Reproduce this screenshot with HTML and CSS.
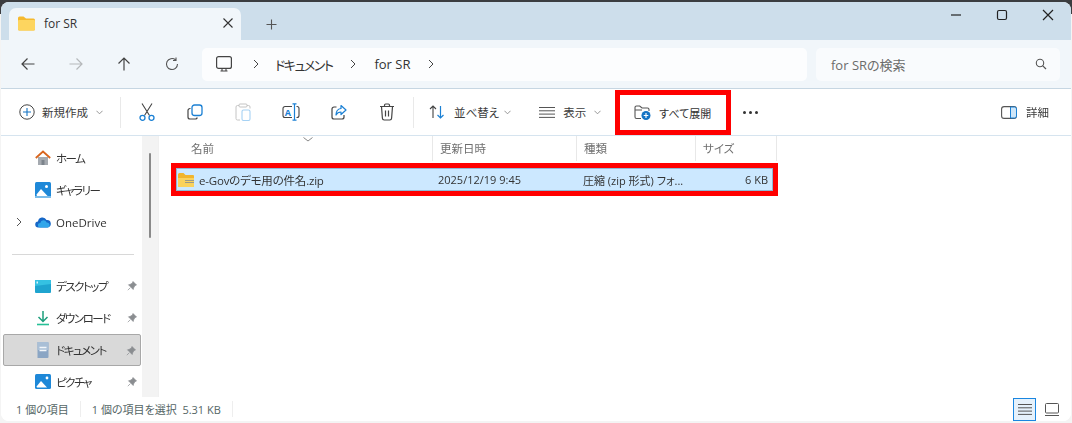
FILE: index.html
```html
<!DOCTYPE html>
<html lang="ja">
<head>
<meta charset="utf-8">
<title>for SR</title>
<link rel="stylesheet" href="styles.css">
</head>
<body>
<div class="window">
  <header class="titlebar">
    <div class="tab">
      <svg class="tab-folder" viewBox="0 0 17 15" width="17" height="15"><path d="M0 2a1.5 1.5 0 0 1 1.5-1.5h4L8 2.500h7.500A1.500 1.500 0 0 1 17 4v9a1.500 1.500 0 0 1-1.500 1.500h-14A1.500 1.500 0 0 1 0 13z" fill="#f5b92e"/><path d="M0 5a1 1 0 0 1 1-1h15a1 1 0 0 1 1 1v8a1.500 1.500 0 0 1-1.500 1.500h-14A1.500 1.500 0 0 1 0 13z" fill="#fdd55f"/></svg>
      <span class="tab-title">for SR</span>
      <svg class="tab-close" viewBox="0 0 10 10" width="10" height="10"><path d="M.5.5l9 9M9.500.5l-9 9" stroke="#333" stroke-width="1.100" fill="none"/></svg>
    </div>
    <svg class="tab-add" viewBox="0 0 11 11" width="11" height="11"><path d="M5.500.5v10M.5 5.500h10" stroke="#555" stroke-width="1.100" fill="none"/></svg>
    <div class="win-controls">
      <svg viewBox="0 0 12 12" width="12" height="12"><path d="M1 6h10" stroke="#222" stroke-width="1.200"/></svg>
      <svg viewBox="0 0 12 12" width="12" height="12"><rect x="1.500" y="1.500" width="9" height="9" rx="1.500" stroke="#222" stroke-width="1.200" fill="none"/></svg>
      <svg viewBox="0 0 12 12" width="12" height="12"><path d="M1 1l10 10M11 1L1 11" stroke="#222" stroke-width="1.200" fill="none"/></svg>
    </div>
  </header>

  <nav class="navbar">
    <div class="nav-buttons">
      <svg viewBox="0 0 14 14" width="14" height="14"><path d="M13.500 7H1M6.500 1.500L1 7l5.500 5.500" stroke="#444" stroke-width="1.200" fill="none"/></svg>
      <svg viewBox="0 0 14 14" width="14" height="14"><path d="M.5 7H13M7.500 1.500L13 7l-5.500 5.500" stroke="#b5b8ba" stroke-width="1.200" fill="none"/></svg>
      <svg viewBox="0 0 14 14" width="14" height="14"><path d="M7 13.500V1M1.500 6.500L7 1l5.500 5.500" stroke="#444" stroke-width="1.200" fill="none"/></svg>
      <svg viewBox="0 0 14 14" width="14" height="14"><path d="M12.500 7A5.500 5.500 0 1 1 10.500 2.800M11 .5v3H8" stroke="#555" stroke-width="1.100" fill="none"/></svg>
    </div>
    <div class="address">
      <svg class="pc" viewBox="0 0 16 16" width="16" height="16"><rect x=".6" y=".6" width="14.800" height="11.800" rx="2" stroke="#444" stroke-width="1.200" fill="none"/><path d="M4.500 15h7M6 12.500v2.500M10 12.500v2.500" stroke="#444" stroke-width="1.100"/></svg>
      <svg class="crumb-sep" viewBox="0 0 6 10" width="6" height="10"><path d="M1 1l4 4-4 4" stroke="#444" stroke-width="1" fill="none"/></svg>
      <span class="crumb crumb-kana">ドキュメント</span>
      <svg class="crumb-sep" viewBox="0 0 6 10" width="6" height="10"><path d="M1 1l4 4-4 4" stroke="#444" stroke-width="1" fill="none"/></svg>
      <span class="crumb">for SR</span>
      <svg class="crumb-sep" viewBox="0 0 6 10" width="6" height="10"><path d="M1 1l4 4-4 4" stroke="#444" stroke-width="1" fill="none"/></svg>
    </div>
    <div class="search">
      <span>for SRの検索</span>
      <svg viewBox="0 0 12 12" width="12" height="12"><circle cx="5" cy="5" r="3.700" stroke="#555" stroke-width="1.100" fill="none"/><path d="M7.800 7.800L11 11" stroke="#555" stroke-width="1.200"/></svg>
    </div>
  </nav>

  <div class="toolbar">
    <button class="tool tool-new">
      <svg viewBox="0 0 16 16" width="16" height="16"><circle cx="8" cy="8" r="7.200" stroke="#444" stroke-width="1" fill="none"/><path d="M8 4v8M4 8h8" stroke="#1574c4" stroke-width="1.100"/></svg>
      <span>新規作成</span>
      <svg class="chev" viewBox="0 0 8 5" width="7" height="5"><path d="M.5.5L4 4 7.500.5" stroke="#888" fill="none"/></svg>
    </button>
    <i class="tool-sep"></i>
    <div class="icon-tools">
      <svg viewBox="0 0 16 18" width="16" height="18"><path d="M3 .5l7.500 12M13 .5L5.500 12.500" stroke="#444" stroke-width="1.100" fill="none"/><circle cx="3.500" cy="14.800" r="2.500" stroke="#1b80d4" stroke-width="1.300" fill="none"/><circle cx="12.500" cy="14.800" r="2.500" stroke="#1b80d4" stroke-width="1.300" fill="none"/></svg>
      <svg viewBox="0 0 16 16" width="16" height="16"><path d="M3.500 4.500H3A2 2 0 0 0 1 6.500V13a2 2 0 0 0 2 2h5.500a2 2 0 0 0 1.800-1.500" stroke="#444" stroke-width="1.200" fill="none"/><rect x="5" y="1" width="10" height="10.500" rx="2.500" stroke="#1b80d4" stroke-width="1.300" fill="none"/></svg>
      <svg viewBox="0 0 16 18" width="16" height="18"><path d="M4 2.500H2.500a1.500 1.500 0 0 0-1.500 1.500v11.500A1.500 1.500 0 0 0 2.500 17H5M12 2.500h1.500A1.500 1.500 0 0 1 15 4v1.500" stroke="#c4c4c4" fill="none"/><rect x="4" y="1" width="8" height="3" rx="1" stroke="#c4c4c4" fill="none"/><rect x="7" y="7" width="8" height="10.500" rx="1.500" stroke="#a6d2f4" stroke-width="1.100" fill="none"/></svg>
      <svg viewBox="0 0 18 18" width="18" height="18"><path d="M10 3.500H3a2 2 0 0 0-2 2v7a2 2 0 0 0 2 2h7M14.500 3.500h.5a2 2 0 0 1 2 2v7a2 2 0 0 1-2 2h-.5" stroke="#444" stroke-width="1.100" fill="none"/><path d="M10.500.8h4M10.500 17.200h4M12.500 .8v16.400" stroke="#1b80d4" stroke-width="1.200" fill="none"/><text x="2.800" y="12.500" class="rename-a">A</text></svg>
      <svg viewBox="0 0 16 16" width="16" height="16"><path d="M5.500 3H3a2 2 0 0 0-2 2v8a2 2 0 0 0 2 2h8a2 2 0 0 0 2-2v-2" stroke="#444" stroke-width="1.200" fill="none"/><path d="M10 1.500L15 6l-5 4.500V8C7.500 8 6 9 5 11c0-3.500 1.500-6 5-6.500z" stroke="#1b80d4" stroke-width="1.200" fill="none" stroke-linejoin="round"/></svg>
      <svg viewBox="0 0 16 18" width="16" height="18"><path d="M1 3.500h14M5.500 3.500V2.200A1.200 1.200 0 0 1 6.700 1h2.600a1.200 1.200 0 0 1 1.200 1.200v1.300M2.500 3.500l.9 11.800A1.800 1.800 0 0 0 5.200 17h5.600a1.800 1.800 0 0 0 1.800-1.700l.9-11.800M6.500 7.500v6M9.500 7.500v6" stroke="#444" stroke-width="1.200" fill="none"/></svg>
    </div>
    <i class="tool-sep tool-sep-tight"></i>
    <button class="tool tool-sort">
      <svg viewBox="0 0 16 14" width="16" height="14"><path d="M4 13V1M1 4l3-3 3 3" stroke="#444" stroke-width="1.100" fill="none"/><path d="M11.500 1v12M8.500 10l3 3 3-3" stroke="#1b80d4" stroke-width="1.200" fill="none"/></svg>
      <span>並べ替え</span>
      <svg class="chev" viewBox="0 0 8 5" width="7" height="5"><path d="M.5.5L4 4 7.500.5" stroke="#888" fill="none"/></svg>
    </button>
    <button class="tool tool-view">
      <svg viewBox="0 0 16 11" width="16" height="11"><path d="M0 .5h16M0 3.800h16M0 7.100h16M0 10.400h16" stroke="#555" stroke-width="1"/></svg>
      <span>表示</span>
      <svg class="chev" viewBox="0 0 8 5" width="7" height="5"><path d="M.5.5L4 4 7.500.5" stroke="#888" fill="none"/></svg>
    </button>
    <button class="tool tool-extract">
      <svg viewBox="0 0 17 15" width="17" height="15"><path d="M7 13.500H2.500A1.500 1.500 0 0 1 1 12V2.500A1.500 1.500 0 0 1 2.500 1h3.200L8 3h5.500A1.500 1.500 0 0 1 15 4.500V6M1 5h7" stroke="#555" stroke-width="1.100" fill="none"/><circle cx="12" cy="10.500" r="4.500" fill="#1574c4"/><path d="M12 8v5M9.700 10.500h4.600" stroke="#fff" stroke-width="1.100"/></svg>
      <span>すべて展開</span>
    </button>
    <div class="more"><i></i><i></i><i></i></div>
    <button class="tool tool-details">
      <svg viewBox="0 0 16 13" width="16" height="13"><rect x=".6" y=".6" width="14.800" height="11.800" rx="2.500" stroke="#555" stroke-width="1.100" fill="none"/><path d="M9.500 1h4a2 2 0 0 1 2 2v7a2 2 0 0 1-2 2h-4z" fill="#cfe6f8" stroke="#1b80d4"/></svg>
      <span>詳細</span>
    </button>
  </div>

  <div class="main">
    <aside class="sidebar">
      <ul class="tree">
        <li class="item">
          <svg viewBox="0 0 16 16" width="16" height="16"><path d="M3 7h10v8H3z" fill="#a5aab0"/><path d="M6.500 10h3v5h-3z" fill="#7c848c"/><path d="M.8 8L8 1.500 15.200 8" stroke="#d9651d" stroke-width="1.800" fill="none"/></svg>
          <span class="kana">ホーム</span>
        </li>
        <li class="item">
          <svg viewBox="0 0 16 16" width="16" height="16"><rect width="16" height="16" rx="1.500" fill="#1e88d8"/><circle cx="11.500" cy="4.500" r="1.500" fill="#fff"/><path d="M1.500 12.500L6 7l7 7.500H2z" fill="#fff"/><path d="M0 14h16v2H0z" fill="#7bbce9"/></svg>
          <span class="kana">ギャラリー</span>
        </li>
        <li class="item">
          <svg class="expander" viewBox="0 0 6 10" width="6" height="10"><path d="M1 1l4 4-4 4" stroke="#555" fill="none"/></svg>
          <svg viewBox="0 0 16 12" width="16" height="12"><path d="M3.500 11.500a3 3 0 0 1-.5-6 4.500 4.500 0 0 1 8.500-1.500 3.500 3.500 0 0 1 1 7.500z" fill="#1667c7"/><path d="M5 11.500a2.300 2.300 0 0 1 .3-4.600 3.300 3.300 0 0 1 6.300-.4 2.700 2.700 0 0 1 1.700 5z" fill="#31a6ea"/></svg>
          <span>OneDrive</span>
        </li>
        <li class="tree-rule"></li>
        <li class="item pinned">
          <svg viewBox="0 0 16 13" width="16" height="13"><rect width="16" height="13" rx="1" fill="#1fa4cf"/><path d="M0 0h16v4L0 6z" fill="#35c1e2"/><rect x="1.500" y="1.500" width="1.500" height="2" fill="#d9f4fb"/></svg>
          <span class="kana">デスクトップ</span>
          <svg class="pin" viewBox="0 0 10 10" width="10" height="10"><path d="M6 .5L9.500 4 8 4.500 6.500 7l-.3 1.500L1.500 3.800 3 3.500 5.500 2z M3.300 6.700L.8 9.200" fill="#8a8d90" stroke="#8a8d90" stroke-width=".7"/></svg>
        </li>
        <li class="item pinned">
          <svg viewBox="0 0 16 16" width="16" height="16"><path d="M8 1v10M3.500 7L8 11.500 12.500 7" stroke="#1d9e7c" stroke-width="1.500" fill="none"/><path d="M2 14.500h12" stroke="#27c096" stroke-width="1.600"/></svg>
          <span class="kana">ダウンロード</span>
          <svg class="pin" viewBox="0 0 10 10" width="10" height="10"><path d="M6 .5L9.500 4 8 4.500 6.500 7l-.3 1.500L1.500 3.800 3 3.500 5.500 2z M3.300 6.700L.8 9.200" fill="#8a8d90" stroke="#8a8d90" stroke-width=".7"/></svg>
        </li>
        <li class="item pinned selected">
          <svg viewBox="0 0 16 16" width="16" height="16"><path d="M2.500 0h10a1 1 0 0 1 1 1v14a1 1 0 0 1-1 1h-10z" fill="#8aa5c4"/><path d="M2.500 0h10a1 1 0 0 1 1 1v7H2.500z" fill="#a9bfd6"/><path d="M4.500 5.500h7M4.500 8.500h7" stroke="#f2f6fa" stroke-width="1.300"/></svg>
          <span class="kana">ドキュメント</span>
          <svg class="pin" viewBox="0 0 10 10" width="10" height="10"><path d="M6 .5L9.500 4 8 4.500 6.500 7l-.3 1.500L1.500 3.800 3 3.500 5.500 2z M3.300 6.700L.8 9.200" fill="#8a8d90" stroke="#8a8d90" stroke-width=".7"/></svg>
        </li>
        <li class="item pinned">
          <svg viewBox="0 0 16 16" width="16" height="16"><rect width="16" height="15" rx="1.500" fill="#1e88d8"/><circle cx="12" cy="4" r="1.400" fill="#fff"/><path d="M1.500 12.500L6 7l6 6.500H2z" fill="#fff"/></svg>
          <span class="kana">ピクチャ</span>
          <svg class="pin" viewBox="0 0 10 10" width="10" height="10"><path d="M6 .5L9.500 4 8 4.500 6.500 7l-.3 1.500L1.500 3.800 3 3.500 5.500 2z M3.300 6.700L.8 9.200" fill="#8a8d90" stroke="#8a8d90" stroke-width=".7"/></svg>
        </li>
      </ul>
      <div class="scrolltrack"><i class="thumb"></i></div>
    </aside>
    <section class="files">
      <div class="sort-mark"><svg viewBox="0 0 10 5" width="10" height="5"><path d="M.5.500L5 4 9.500.5" stroke="#888" fill="none"/></svg></div>
      <div class="columns">
        <div class="col col-name">名前</div>
        <div class="col col-date">更新日時</div>
        <div class="col col-type">種類</div>
        <div class="col col-size">サイズ</div>
      </div>
      <div class="row-frame">
        <div class="file-row">
          <div class="cell-name">
            <svg viewBox="0 0 16 14" width="16" height="14"><path d="M0 1.500A1.500 1.500 0 0 1 1.500 0h4L7.500 2H15a1 1 0 0 1 1 1v9.500a1.500 1.500 0 0 1-1.500 1.500h-13A1.500 1.500 0 0 1 0 12.500z" fill="#f1b52c"/><path d="M0 5h16v7.500a1.500 1.500 0 0 1-1.500 1.500h-13A1.500 1.500 0 0 1 0 12.500z" fill="#fad25c"/><path d="M7 7.500h9M7 9.500h9" stroke="#9a9a8a" stroke-width="1"/></svg>
            <span class="file-name">e-Govのデモ用の件名.zip</span>
          </div>
          <div class="cell-date">2025/12/19 9:45</div>
          <div class="cell-type">圧縮 (zip 形式) フォ...</div>
          <div class="cell-size">6 KB</div>
        </div>
      </div>
    </section>
  </div>

  <footer class="statusbar">
    <span class="count">1 個の項目</span>
    <i class="status-sep"></i>
    <span class="selection">1 個の項目を選択&nbsp;&nbsp;5.31 KB</span>
    <i class="status-sep"></i>
    <div class="view-toggle">
      <div class="view-btn active"><svg viewBox="0 0 14 11" width="14" height="11"><path d="M0 .5h14M0 3.800h14M0 7.100h14M0 10.400h14" stroke="#555"/></svg></div>
      <div class="view-btn"><svg viewBox="0 0 14 13" width="14" height="13"><rect x=".5" y=".5" width="13" height="9.500" rx="1" stroke="#555" fill="none"/><path d="M0 12.500h14" stroke="#555"/></svg></div>
    </div>
  </footer>
</div>
</body>
</html>
```

FILE: styles.css
```css
* { box-sizing: border-box; }
html, body { height: 100%; }
body {
  margin: 0;
  overflow: hidden;
  background: linear-gradient(#3b3d40 0 14px, #f4f4f4 14px);
  font-family: "Open Sans", "Noto Sans CJK JP", sans-serif;
  font-size: 11.500px;
  color: #3c3c3c;
  font-feature-settings: "palt";
}
ul { list-style: none; margin: 0; padding: 0; }
button { all: unset; box-sizing: border-box; display: flex; align-items: center; }
svg { display: block; flex: none; }
i { display: block; }

.window {
  height: 419px;
  margin: 2px 1px 0;
  border-radius: 8px;
  overflow: hidden;
  background: #fff;
  display: flex;
  flex-direction: column;
  filter: blur(.45px);
}

.titlebar {
  height: 38px;
  flex: none;
  background: #cddeeb;
  display: flex;
  align-items: flex-end;
  padding-left: 8px;
}
.tab {
  width: 232px;
  height: 32px;
  background: #f1f6fa;
  border-radius: 7px 7px 0 0;
  display: flex;
  align-items: center;
  padding: 0 0 2px 9px;
}
.tab-title { margin-left: 9px; font-size: 12px; color: #333; flex: 1; }
.tab-close { margin-right: 8px; }
.tab-add { margin: 0 0 10px 25px; }
.win-controls {
  margin-left: auto;
  align-self: flex-start;
  display: flex;
  gap: 34px;
  padding: 7px 17px 0 0;
}

.navbar {
  height: 49px;
  flex: none;
  background: #f1f6fa;
  border-bottom: 1px solid #c6d6e2;
  display: flex;
  align-items: center;
  padding: 0 11px 0 20px;
}
.nav-buttons {
  display: flex;
  gap: 34px;
  width: 181px;
}
.address {
  width: 605px;
  height: 33px;
  background: #fcfdfe;
  border-radius: 5px;
  display: flex;
  align-items: center;
  padding-left: 14px;
  font-size: 13px;
  color: #333;
}
.crumb-kana { letter-spacing: -1.500px; }
.crumb-sep { margin: 0 18px; }
.pc + .crumb-sep { margin: 0 16px 0 21px; }
.search {
  width: 244px;
  height: 33px;
  margin-left: 9px;
  background: #f9fbfd;
  border-radius: 5px;
  display: flex;
  align-items: center;
  justify-content: space-between;
  padding: 0 13px 0 15px;
  font-size: 13px;
  color: #6b6b6b;
}

.toolbar {
  height: 47px;
  flex: none;
  border-bottom: 1px solid #d6e4ef;
  display: flex;
  align-items: center;
  padding-left: 18px;
}
.tool { gap: 7px; }
.tool-new { width: 84px; }
.tool-new .chev { margin-left: 1px; }
.tool-sep { width: 1px; height: 31px; background: #e9e9e9; margin-left: 17px; }
.tool-sep-tight { margin-left: 2px; }
.icon-tools {
  padding-left: 2px;
  display: grid;
  grid-template-columns: repeat(6, 48px);
  align-items: center;
  justify-items: center;
}
.rename-a { font: 700 9px "Open Sans", sans-serif; fill: #1b80d4; }
.tool-sort { margin-left: 15px; gap: 9px; }
.tool-sort .chev { margin-left: -4px; }
.tool-view { margin-left: 28px; gap: 8px; }
.tool-view .chev { margin-left: 0; }
.tool-extract {
  width: 116px;
  height: 45px;
  margin-left: 14px;
  border: 5px solid #f00;
  padding-left: 14px;
  gap: 8px;
  align-self: flex-end;
  color: #333;
  font-size: 11px;
}
.more { display: flex; gap: 3px; margin-left: 12px; }
.more i { width: 3px; height: 3px; border-radius: 50%; background: #333; }
.tool-details { margin-left: auto; margin-right: 22px; gap: 9px; }

.main {
  flex: 1;
  min-height: 0;
  display: flex;
}
.sidebar {
  width: 158px;
  flex: none;
  display: flex;
  border-right: 1px solid #f0f0f0;
}
.tree {
  width: 141px;
  padding: 6px 1px 0 2px;
  overflow: hidden;
}
.item {
  height: 32px;
  position: relative;
  display: flex;
  align-items: center;
  padding-left: 32px;
  gap: 5px;
  color: #333;
}
.kana { letter-spacing: -1.500px; }
.item .expander { position: absolute; left: 13px; top: 11px; }
.selected {
  background: #d9d9d9;
  border: 1px solid #a8a8a8;
  border-radius: 2px;
  padding-left: 31px;
}
.pin { position: absolute; right: 4px; top: 11px; }
.tree-rule { height: 1px; margin: 16px 7px 15px 9px; background: #d8d8d8; }
.scrolltrack { flex: 1; background: #f3f3f3; padding: 17px 0 0 7px; }
.thumb { width: 2px; height: 85px; border-radius: 1px; background: #8a8a8a; }

.files { flex: 1; min-width: 0; padding-left: 12px; position: relative; }
.sort-mark { position: absolute; left: 144px; top: 1px; }
.columns {
  height: 25px;
  display: grid;
  grid-template-columns: 262px 144px 119px 81px;
  color: #6f6f6f;
}
.col {
  border-right: 1px solid #e8e8e8;
  padding: 4px 0 0 7px;
}
.col-name { padding-left: 20px; }
.row-frame {
  width: 607px;
  height: 33px;
  margin-top: 2px;
  border: 5px solid #f00;
}
.file-row {
  height: 23px;
  background: #cce8ff;
  border: 1px solid #8fb8d4;
  display: grid;
  grid-template-columns: 255px 144px 119px 1fr;
  align-items: center;
  color: #333;
}
.cell-name { display: flex; align-items: center; gap: 5px; padding-left: 1px; }
.file-name { letter-spacing: -.2px; }
.cell-date, .cell-type { padding-left: 6px; font-size: 11px; }
.cell-type { padding-left: 7px; }
.cell-size { text-align: right; padding-right: 4px; font-size: 11px; }

.statusbar {
  height: 24px;
  flex: none;
  display: flex;
  align-items: center;
  padding-left: 15px;
  background: #fff;
  color: #566;
  font-size: 11px;
}
.status-sep { width: 1px; height: 16px; background: #eee; margin: 0 11px; }
.view-toggle { margin-left: auto; display: flex; align-items: center; gap: 4px; padding-right: 8px; }
.view-btn { width: 23px; height: 23px; display: flex; align-items: center; justify-content: center; }
.view-btn.active { background: #e5f1fb; border: 1px solid #1a86e0; }
```
